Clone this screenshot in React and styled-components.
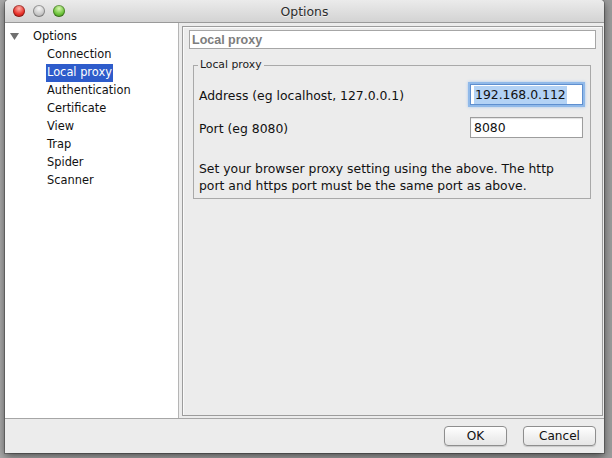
import React from "react";
import styled, { createGlobalStyle, css } from "styled-components";

const GlobalStyle = createGlobalStyle`
  html, body {
    margin: 0;
    padding: 0;
    height: 100%;
    overflow: hidden;
  }
  body {
    background: linear-gradient(to right, #a9a9a9, #9c9c9c);
    font-family: "DejaVu Sans", "Liberation Sans", sans-serif;
  }
`;

const Stage = styled.div`
  width: 612px;
  height: 458px;
  padding-left: 5px;
  box-sizing: border-box;
`;

const Window = styled.div`
  width: 599px;
  height: 453px;
  display: flex;
  flex-direction: column;
  background: #ececec;
  border-radius: 4px 4px 0 0;
  box-shadow: 0 3px 9px rgba(0, 0, 0, 0.55), 0 0 0 1px rgba(0, 0, 0, 0.25);
  overflow: hidden;
`;

const TitleBar = styled.div`
  height: 23px;
  flex: none;
  position: relative;
  display: flex;
  align-items: center;
  justify-content: center;
  background: linear-gradient(#ebebeb, #d3d3d3);
  border-bottom: 1px solid #9a9a9a;
  box-sizing: border-box;
`;

const Lights = styled.div`
  position: absolute;
  left: 8px;
  top: 5px;
  display: flex;
  gap: 8px;
`;

const Light = styled.span`
  width: 12px;
  height: 12px;
  border-radius: 50%;
  box-shadow: inset 0 0 0 1px rgba(0, 0, 0, 0.3);
  ${(p) =>
    p.color === "red" &&
    css`
      background: radial-gradient(circle at 50% 30%, #ffb0a8, #e8312a 55%, #a5160f);
    `}
  ${(p) =>
    p.color === "grey" &&
    css`
      background: radial-gradient(circle at 50% 30%, #f6f6f6, #c8c8c8 55%, #9b9b9b);
    `}
  ${(p) =>
    p.color === "green" &&
    css`
      background: radial-gradient(circle at 50% 30%, #d8f7b0, #6cc33a 55%, #3a7d14);
    `}
`;

const Title = styled.div`
  font-size: 12.4px;
  color: #2c2c2c;
  text-shadow: 0 1px 0 rgba(255, 255, 255, 0.6);
`;

const Body = styled.div`
  flex: 1;
  display: flex;
  min-height: 0;
`;

const Tree = styled.div`
  width: 174px;
  flex: none;
  background: #fff;
  border-right: 1px solid #b5b5b5;
  padding-top: 5px;
  box-sizing: border-box;
`;

const TreeRow = styled.div`
  height: 18px;
  display: flex;
  align-items: center;
  font-size: 11.4px;
  color: #111;
  padding-left: ${(p) => (p.child ? "41px" : "5px")};
`;

const Toggle = styled.svg`
  width: 9px;
  height: 8px;
  margin-right: 13px;
`;

const TreeLabel = styled.span`
  padding: 1px 1px 2px 1px;
  line-height: 15px;
  ${(p) =>
    p.selected &&
    css`
      background: #2e5ccb;
      color: #fff;
    `}
`;

const Main = styled.div`
  flex: 1;
  display: flex;
  flex-direction: column;
  margin: 3px 1px 2px 3px;
  padding: 3px 6px 0 6px;
  border: 1px solid #9c9c9c;
  box-shadow: inset 1px 1px 0 #fafafa;
  background: #ececec;
  min-width: 0;
`;

const Header = styled.div`
  height: 19px;
  box-sizing: border-box;
  border: 1px solid #a6a6a6;
  background: #fff;
  padding-left: 2px;
  display: flex;
  align-items: center;
  font-family: "Liberation Sans", Arial, sans-serif;
  font-weight: bold;
  font-size: 12.5px;
  color: #7d7d7d;
`;

const Group = styled.fieldset`
  margin: 10px 5px 0 4px;
  padding: 13px 7px 4px 5px;
  border: 1px solid #a9a9a9;
  min-width: 0;
`;

const Legend = styled.legend`
  padding: 0 2px;
  margin-left: -1px;
  font-size: 10.8px;
  line-height: 12px;
  color: #1a1a1a;
`;

const Fields = styled.div`
  display: grid;
  grid-template-columns: 1fr 113px;
  grid-auto-rows: 21px;
  row-gap: 12px;
  align-items: center;
`;

const Label = styled.div`
  font-size: 12.4px;
  color: #111;
  padding-top: 2px;
`;

const Input = styled.div`
  height: 21px;
  box-sizing: border-box;
  background: #fff;
  border: 1px solid #9d9d9d;
  box-shadow: inset 0 1px 1px rgba(0, 0, 0, 0.12);
  padding-left: 3px;
  display: flex;
  align-items: center;
  font-size: 12.4px;
  color: #111;
  ${(p) =>
    p.focused &&
    css`
      border-color: #5f8fcf;
      box-shadow: 0 0 0 2px #90b9e9, 0 0 3px 2px #a9c9ef;
    `}
`;

const Selection = styled.span`
  background: #b3d2f5;
  padding: 1px 1px;
  line-height: 16px;
`;

const Help = styled.div`
  margin-top: 22px;
  font-size: 12.4px;
  line-height: 17px;
  color: #111;
`;

const Footer = styled.div`
  height: 35px;
  flex: none;
  border-top: 1px solid #a6a6a6;
  box-sizing: border-box;
  display: flex;
  align-items: center;
  justify-content: flex-end;
  gap: 16px;
  padding: 0 8px 1px 0;
`;

const Button = styled.div`
  width: ${(p) => p.width}px;
  height: 20px;
  box-sizing: border-box;
  border: 1px solid #8e8e8e;
  border-radius: 4px;
  background: linear-gradient(#ffffff, #f1f1f1 50%, #e6e6e6);
  box-shadow: 0 1px 1px rgba(0, 0, 0, 0.15);
  display: flex;
  align-items: center;
  justify-content: center;
  font-size: 12.1px;
  color: #111;
`;

const ITEMS = [
  "Connection",
  "Local proxy",
  "Authentication",
  "Certificate",
  "View",
  "Trap",
  "Spider",
  "Scanner",
];

export default function App() {
  return (
    <Stage>
      <GlobalStyle />
      <Window>
        <TitleBar>
          <Lights>
            <Light color="red" />
            <Light color="grey" />
            <Light color="green" />
          </Lights>
          <Title>Options</Title>
        </TitleBar>
        <Body>
          <Tree>
            <TreeRow>
              <Toggle viewBox="0 0 9 8">
                <polygon points="0,0 9,0 4.5,7" fill="#707070" />
              </Toggle>
              <TreeLabel>Options</TreeLabel>
            </TreeRow>
            {ITEMS.map((item) => (
              <TreeRow child key={item}>
                <TreeLabel selected={item === "Local proxy"}>{item}</TreeLabel>
              </TreeRow>
            ))}
          </Tree>
          <Main>
            <Header>Local proxy</Header>
            <Group>
              <Legend>Local proxy</Legend>
              <Fields>
                <Label>Address (eg localhost, 127.0.0.1)</Label>
                <Input focused>
                  <Selection>192.168.0.112</Selection>
                </Input>
                <Label>Port (eg 8080)</Label>
                <Input>8080</Input>
              </Fields>
              <Help>
                Set your browser proxy setting using the above. The http
                <br />
                port and https port must be the same port as above.
              </Help>
            </Group>
          </Main>
        </Body>
        <Footer>
          <Button width={63}>OK</Button>
          <Button width={73}>Cancel</Button>
        </Footer>
      </Window>
    </Stage>
  );
}
